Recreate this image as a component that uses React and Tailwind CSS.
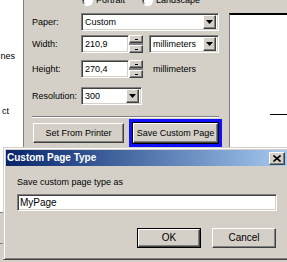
import React from "react";

const sunken =
  "border border-t-[#808080] border-l-[#808080] border-b-white border-r-white shadow-[inset_1px_1px_0_#404040,inset_-1px_-1px_0_#d4d0c8]";
const raised =
  "border border-t-white border-l-white border-b-[#404040] border-r-[#404040] shadow-[inset_-1px_-1px_0_#808080,inset_1px_1px_0_#d4d0c8] bg-[#d4d0c8]";

function DownArrow() {
  return (
    <svg width="7" height="4" viewBox="0 0 7 4">
      <path d="M0 0H7L3.5 4Z" fill="#000" />
    </svg>
  );
}

function Select({ w, text }) {
  return (
    <div className={`${sunken} ${w} h-[18px] bg-white flex items-center pl-[3px] pr-[2px]`}>
      <span className="flex-1 text-[9px] leading-none text-black">{text}</span>
      <div className={`${raised} w-[13px] h-[14px] flex items-center justify-center`}>
        <DownArrow />
      </div>
    </div>
  );
}

function Spin() {
  return (
    <div className="flex items-center">
      <div className={`${sunken} w-[48px] h-[18px] bg-white flex items-center pl-[3px]`}>
        <span className="text-[9px] leading-none text-black">{"{v}"}</span>
      </div>
    </div>
  );
}

function SpinBox({ value }) {
  return (
    <div className="flex h-[18px]">
      <div className={`${sunken} w-[48px] h-[18px] bg-white flex items-center pl-[3px]`}>
        <span className="text-[9px] leading-none text-black">{value}</span>
      </div>
      <div className="w-[14px] h-[18px] flex flex-col bg-[#808080]">
        <div className={`${raised} h-[8px] flex items-center justify-center`}>
          <div className="w-[3px] h-px bg-black" />
        </div>
        <div className="h-[2px]" />
        <div className={`${raised} h-[8px] flex items-center justify-center`}>
          <div className="w-[3px] h-px bg-black" />
        </div>
      </div>
    </div>
  );
}

function Radio() {
  return (
    <div className="w-[11px] h-[11px] rounded-full bg-white border border-t-[#808080] border-l-[#808080] border-b-white border-r-white shadow-[inset_1px_1px_0_#404040]" />
  );
}

function Label({ children }) {
  return <div className="w-[49px] text-[9px] leading-none text-black">{children}</div>;
}

export default function App() {
  return (
    <div className="relative w-[287px] h-[262px] overflow-hidden bg-[#d4d0c8] font-['Liberation_Sans',Arial,sans-serif]">
      <div className="flex h-[262px]">
        {/* left strip */}
        <div className="w-[23px] flex flex-col">
          <div className="h-[212px] bg-white flex flex-col items-end pr-[8px] text-[9px] leading-none text-black">
            <div className="mt-[52px]">nes</div>
            <div className="mt-[46px] pr-[6px]">ct</div>
          </div>
          <div className="h-px bg-[#808080]" />
          <div className="h-[30px]" />
          <div className="h-px bg-[#808080]" />
        </div>
        <div className="w-px h-[212px] bg-[#808080]" />
        {/* panel */}
        <div className="w-[205px] pl-[8px] flex flex-col">
          <div className="-mt-[6px] h-[12px] flex items-center text-[9px] leading-none text-black">
            <div className="ml-[50px] w-[60px] flex items-center">
              <Radio />
              <span className="ml-[3px]">Portrait</span>
            </div>
            <Radio />
            <span className="ml-[3px]">Landscape</span>
          </div>
          <div className="mt-[7px] h-[18px] flex items-center">
            <Label>Paper:</Label>
            <Select w="w-[138px]" text="Custom" />
          </div>
          <div className="mt-[4px] h-[18px] flex items-center">
            <Label>Width:</Label>
            <SpinBox value="210,9" />
            <div className="ml-[6px]">
              <Select w="w-[70px]" text="millimeters" />
            </div>
          </div>
          <div className="mt-[7px] h-[18px] flex items-center">
            <Label>Height:</Label>
            <SpinBox value="270,4" />
            <span className="ml-[10px] text-[9px] leading-none text-black">millimeters</span>
          </div>
          <div className="mt-[9px] h-[18px] flex items-center">
            <Label>Resolution:</Label>
            <Select w="w-[61px]" text="300" />
          </div>
          <div className="mt-[11px] w-[187px] h-[2px] border-t border-t-[#808080] border-b border-b-white" />
          <div className="mt-[1px] h-[28px] flex items-center">
            <div className={`${raised} ml-[1px] w-[91px] h-[20px] flex items-center justify-center text-[9px] leading-none text-black`}>
              Set From Printer
            </div>
            <div className="ml-[5px] w-[93px] h-[28px] border-[3px] border-[#1010ff]">
              <div className="w-full h-full border border-black">
                <div className={`${raised} w-full h-full flex items-center justify-center text-[9px] leading-none text-black`}>
                  Save Custom Page
                </div>
              </div>
            </div>
          </div>
        </div>
        {/* preview */}
        <div className="flex-1 flex flex-col">
          <div className="mt-[13px] h-[140px] bg-white border-t-2 border-t-black border-l border-l-[#808080] flex flex-col">
            <div className="mt-[99px] ml-[40px] h-px bg-black" />
          </div>
        </div>
      </div>

      {/* dialog */}
      <div className="absolute left-[3px] top-[147px] w-[287px] h-[113px] bg-[#d4d0c8] border border-t-[#d4d0c8] border-l-[#d4d0c8] border-b-[#404040] border-r-[#404040] shadow-[inset_1px_1px_0_#ffffff,inset_-1px_-1px_0_#808080] p-[2px] flex flex-col">
        <div className="h-[16px] flex items-center bg-gradient-to-r from-[#0a246a] to-[#a6caf0] pr-[2px]">
          <span className="flex-1 pl-[1px] text-[10px] font-bold leading-none text-white">Custom Page Type</span>
          <div className={`${raised} w-[16px] h-[13px] flex items-center justify-center`}>
            <svg width="8" height="7" viewBox="0 0 8 7">
              <path d="M0.5 0.5L7.5 6.5M7.5 0.5L0.5 6.5" stroke="#000" strokeWidth="1.6" />
            </svg>
          </div>
        </div>
        <div className="pl-[11px] mt-[11px] h-[11px] flex items-center text-[9px] leading-none text-black">
          Save custom page type as
        </div>
        <div className={`${sunken} ml-[11px] mt-[6px] w-[260px] h-[17px] bg-white flex items-center pl-[2px] text-[10px] leading-none text-black`}>
          MyPage
        </div>
        <div className="mt-[17px] flex justify-end gap-[11px] pr-[11px]">
          <div className="w-[64px] h-[20px] border border-black">
            <div className={`${raised} w-full h-full flex items-center justify-center text-[10px] leading-none text-black`}>
              OK
            </div>
          </div>
          <div className={`${raised} w-[64px] h-[20px] flex items-center justify-center text-[10px] leading-none text-black`}>
            Cancel
          </div>
        </div>
      </div>
    </div>
  );
}
